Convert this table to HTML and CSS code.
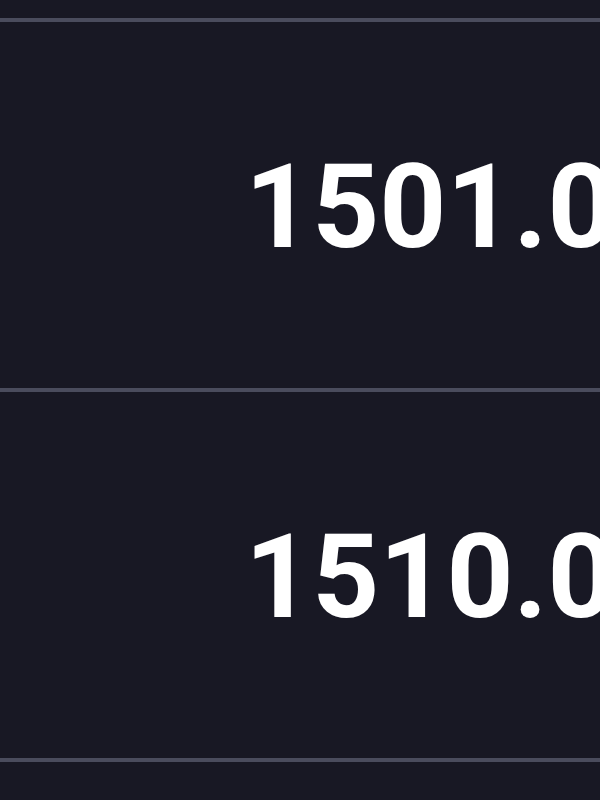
FILE: index.html
```html
<!DOCTYPE html>
<html>
<head>
<meta charset="utf-8">
<link rel="stylesheet" href="styles.css">
</head>
<body>
<div class="list">
  <div class="row"><span class="value">1501.0</span></div>
  <div class="row"><span class="value">1510.0</span></div>
  <div class="row last"></div>
</div>
</body>
</html>
```

FILE: styles.css
```css
html, body {
  margin: 0;
  padding: 0;
  background: #181824;
  width: 600px;
  height: 800px;
  overflow: hidden;
}
.list {
  padding-top: 18px;
  display: flex;
  flex-direction: column;
}
.row {
  border-top: 4px solid #4a4c5d;
  height: 366px;
  box-sizing: content-box;
  display: flex;
  align-items: center;
  padding-left: 245px;
  padding-top: 5px;
  height: 361px;
  overflow: hidden;
  white-space: nowrap;
}
.row.last {
  height: 30px;
  padding-top: 0;
}
.value {
  font-family: Roboto, "Liberation Sans", sans-serif;
  font-weight: 700;
  font-size: 117px;
  line-height: 1;
  color: #ffffff;
}
```
